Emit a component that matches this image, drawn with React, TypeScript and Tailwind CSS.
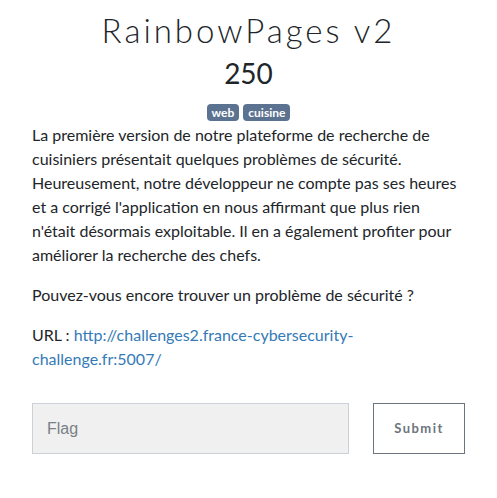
export default function App() {
  return (
    <div className="min-h-screen bg-white px-8 pt-[11px] font-['Lato',sans-serif] text-[#212529]">
      <h3 className="text-center text-[33px] leading-[38px] font-light tracking-[3px] font-['Lato',sans-serif]">
        RainbowPages v2
      </h3>
      <h4 className="mt-[7px] text-center text-[28px] leading-[34px]">250</h4>
      <div className="mt-[14px] flex justify-center gap-1">
        <span className="rounded bg-[#5b7290] px-[5px] text-[12px] leading-[17px] font-bold text-white">web</span>
        <span className="rounded bg-[#5b7290] px-[5px] text-[12px] leading-[17px] font-bold text-white">cuisine</span>
      </div>
      <div className="mt-[2px] text-[16px] leading-[24px]">
        <p>
          La première version de notre plateforme de recherche de cuisiniers présentait quelques problèmes de
          sécurité. Heureusement, notre développeur ne compte pas ses heures et a corrigé l'application en nous
          affirmant que plus rien n'était désormais exploitable. Il en a également profiter pour améliorer la
          recherche des chefs.
        </p>
        <p className="mt-4">Pouvez-vous encore trouver un problème de sécurité ?</p>
        <p className="mt-4">
          URL : <a href="#" className="text-[#337ab7]">http://challenges2.france-cybersecurity-challenge.fr:5007/</a>
        </p>
      </div>
      <form className="mt-[32px] flex gap-6" onSubmit={(e) => e.preventDefault()}>
        <input
          placeholder="Flag"
          className="h-[51px] w-[317px] border border-[#ccd1d9] bg-[#f0f0f0] px-[14px] font-['Liberation_Sans',sans-serif] text-[16px] text-[#495057] placeholder:text-[#7a8087] outline-none"
        />
        <button
          type="submit"
          className="h-[51px] flex-1 border border-[#6c757d] bg-white text-[13px] font-bold tracking-[1.5px] text-[#6c757d]"
        >
          Submit
        </button>
      </form>
    </div>
  );
}
